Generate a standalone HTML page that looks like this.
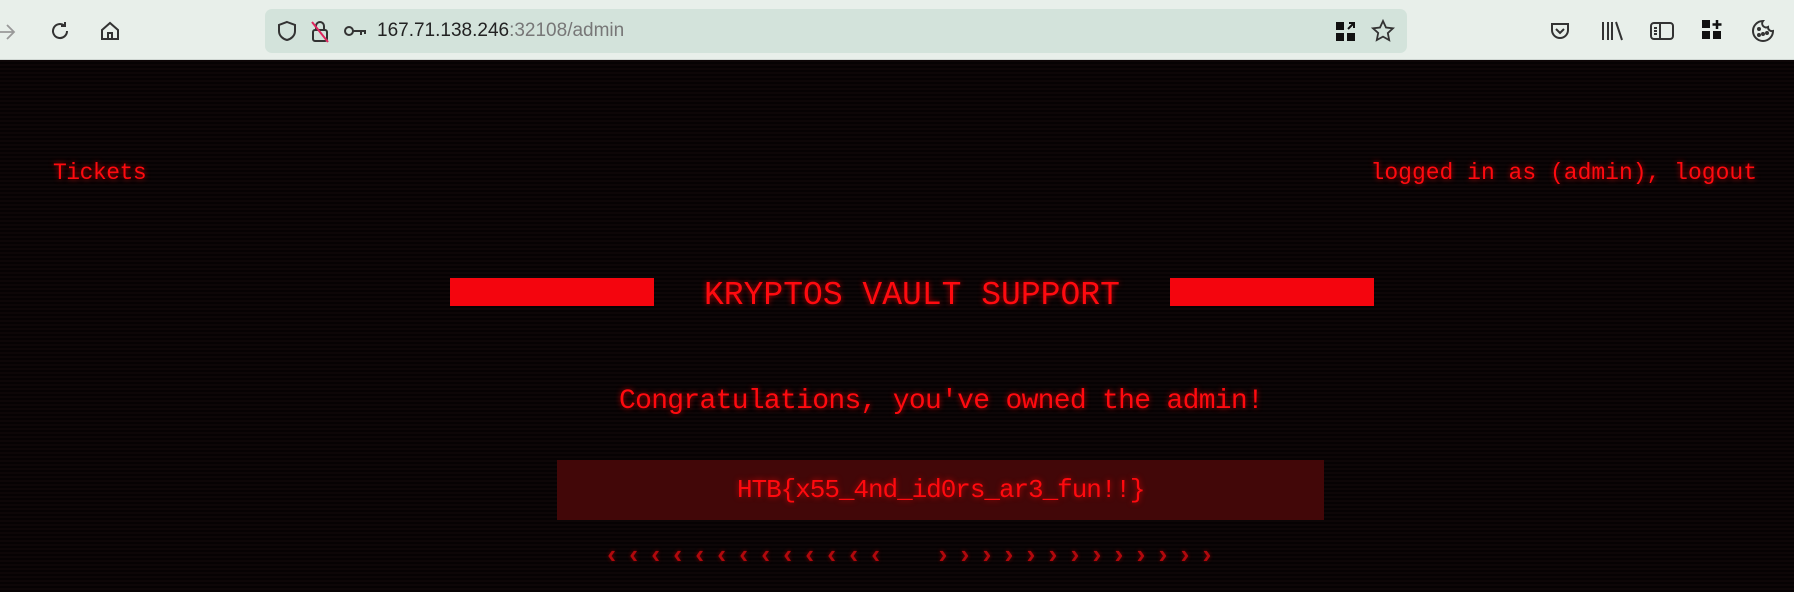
<!DOCTYPE html>
<html><head><meta charset="utf-8"><style>
*{margin:0;padding:0;box-sizing:border-box}
body{width:1794px;height:592px;overflow:hidden;position:relative;font-family:"Liberation Mono",monospace;
background:#0a0405 repeating-linear-gradient(to bottom,#0d0607 0,#0d0607 2px,#060203 2px,#060203 4px);}
.bar{position:absolute;left:0;top:0;width:1794px;height:60px;background:#e8efea;border-bottom:1px solid #cfd6d2}
.url{position:absolute;left:265px;top:9px;width:1142px;height:44px;background:#d3e3db;border-radius:7px}
.t{position:absolute;color:#ff0a0f;text-shadow:0 0 6px rgba(255,0,0,.7);white-space:nowrap}
.ic{position:absolute;}
</style></head><body>
<div class="bar">
 <svg class="ic" style="left:-6px;top:22px" width="24" height="20" viewBox="0 0 24 20" fill="none" stroke="#999" stroke-width="1.8"><path d="M0 10h20M13 3l7 7-7 7"/></svg>
 <svg class="ic" style="left:48px;top:19px" width="24" height="24" viewBox="0 0 24 24" fill="none" stroke="#333" stroke-width="2"><path d="M19 12a7 7 0 1 1-3-5.7"/><path d="M17 3v4h-4"/></svg>
 <svg class="ic" style="left:98px;top:19px" width="24" height="24" viewBox="0 0 24 24" fill="none" stroke="#333" stroke-width="2"><path d="M4 11l8-7 8 7v9H4z"/><path d="M10 20v-6h4v6"/></svg>
 <div class="url">
  <svg class="ic" style="left:10px;top:10px" width="24" height="24" viewBox="0 0 24 24" fill="none" stroke="#333" stroke-width="2"><path d="M12 3l8 3v6c0 5-4 8-8 9-4-1-8-4-8-9V6z"/></svg>
  <svg class="ic" style="left:43px;top:9px" width="24" height="26" viewBox="0 0 24 26" fill="none" stroke="#333" stroke-width="2"><rect x="5" y="12" width="14" height="11" rx="2"/><path d="M8 12V8a4 4 0 0 1 8 0v4"/><path d="M4 4l16 20" stroke="#e0245e"/></svg>
  <svg class="ic" style="left:78px;top:13px" width="26" height="18" viewBox="0 0 26 18" fill="none" stroke="#333" stroke-width="2"><circle cx="6" cy="9" r="4"/><path d="M10 9h13M18 9v4M22 9v3"/></svg>
  <div style="position:absolute;left:112px;top:11px;font:19px 'Liberation Sans',sans-serif;color:#222">167.71.138.246<span style="color:#777">:32108/admin</span></div>
  <svg class="ic" style="left:1070px;top:12px" width="22" height="22" viewBox="0 0 22 22" fill="#111"><rect x="1" y="1" width="8" height="8"/><rect x="1" y="12" width="8" height="8"/><rect x="12" y="12" width="8" height="8"/><path d="M13 8l6-6M14 2h5v5" stroke="#111" stroke-width="2" fill="none"/></svg>
  <svg class="ic" style="left:1106px;top:10px" width="24" height="24" viewBox="0 0 24 24" fill="none" stroke="#333" stroke-width="1.8"><path d="M12 2l3 6.5 7 .8-5.2 4.8 1.4 7L12 17.6 5.8 21l1.4-7L2 9.3l7-.8z"/></svg>
 </div>
 <svg class="ic" style="left:1549px;top:20px" width="22" height="22" viewBox="0 0 22 22" fill="none" stroke="#333" stroke-width="2"><path d="M3 4h16v6a8 8 0 0 1-16 0z"/><path d="M7 9l4 4 4-4"/></svg>
 <svg class="ic" style="left:1600px;top:20px" width="24" height="22" viewBox="0 0 24 22" fill="none" stroke="#333" stroke-width="2"><path d="M3 2v18M8 2v18M12 2v18M16 2l6 18"/></svg>
 <svg class="ic" style="left:1650px;top:21px" width="24" height="20" viewBox="0 0 24 20" fill="none" stroke="#333" stroke-width="2"><rect x="1" y="2" width="22" height="16" rx="3"/><path d="M10 2v16M4 7h3M4 10h3M4 13h3"/></svg>
 <svg class="ic" style="left:1701px;top:19px" width="22" height="22" viewBox="0 0 22 22" fill="#111"><rect x="1" y="1" width="8" height="8"/><rect x="1" y="12" width="8" height="8"/><rect x="12" y="12" width="8" height="8"/><path d="M16 1v9M11.5 5.5h9" stroke="#111" stroke-width="2.5"/></svg>
 <svg class="ic" style="left:1751px;top:19px" width="24" height="24" viewBox="0 0 24 24" fill="none" stroke="#333" stroke-width="2"><path d="M12 2a10 10 0 1 0 10 10 4 4 0 0 1-5-4 4 4 0 0 1-5-6z"/><circle cx="8" cy="10" r="1" fill="#333"/><circle cx="12" cy="15" r="1" fill="#333"/><circle cx="16" cy="14" r="1" fill="#333"/><circle cx="8" cy="16" r="1" fill="#333"/></svg>
</div>

<div class="t" style="left:53px;top:160px;font-size:23px;letter-spacing:-0.5px">Tickets</div>
<div class="t" style="right:37px;top:160px;font-size:23px;letter-spacing:0px">logged in as (admin), logout</div>

<div style="position:absolute;left:450px;top:278px;width:204px;height:28px;background:#f4050e"></div>
<div style="position:absolute;left:1170px;top:278px;width:204px;height:28px;background:#f4050e"></div>
<div class="t" style="left:704px;top:277px;font-size:33px;letter-spacing:0px">KRYPTOS VAULT SUPPORT</div>

<div class="t" style="left:619px;top:386px;font-size:28px;letter-spacing:-0.7px">Congratulations, you've owned the admin!</div>

<div style="position:absolute;left:557px;top:460px;width:767px;height:60px;background:#420708"></div>
<div class="t" style="left:737px;top:475px;font-size:26px;letter-spacing:-1.05px">HTB{x55_4nd_id0rs_ar3_fun!!}</div>

<div class="t" style="left:604px;top:541px;font-size:26px;letter-spacing:6.4px;color:#b0080c;text-shadow:0 0 4px rgba(255,0,0,.4);font-weight:bold">‹‹‹‹‹‹‹‹‹‹‹‹‹</div>
<div class="t" style="left:935px;top:541px;font-size:26px;letter-spacing:6.4px;color:#b0080c;text-shadow:0 0 4px rgba(255,0,0,.4);font-weight:bold">›››››››››››››</div>
</body></html>
